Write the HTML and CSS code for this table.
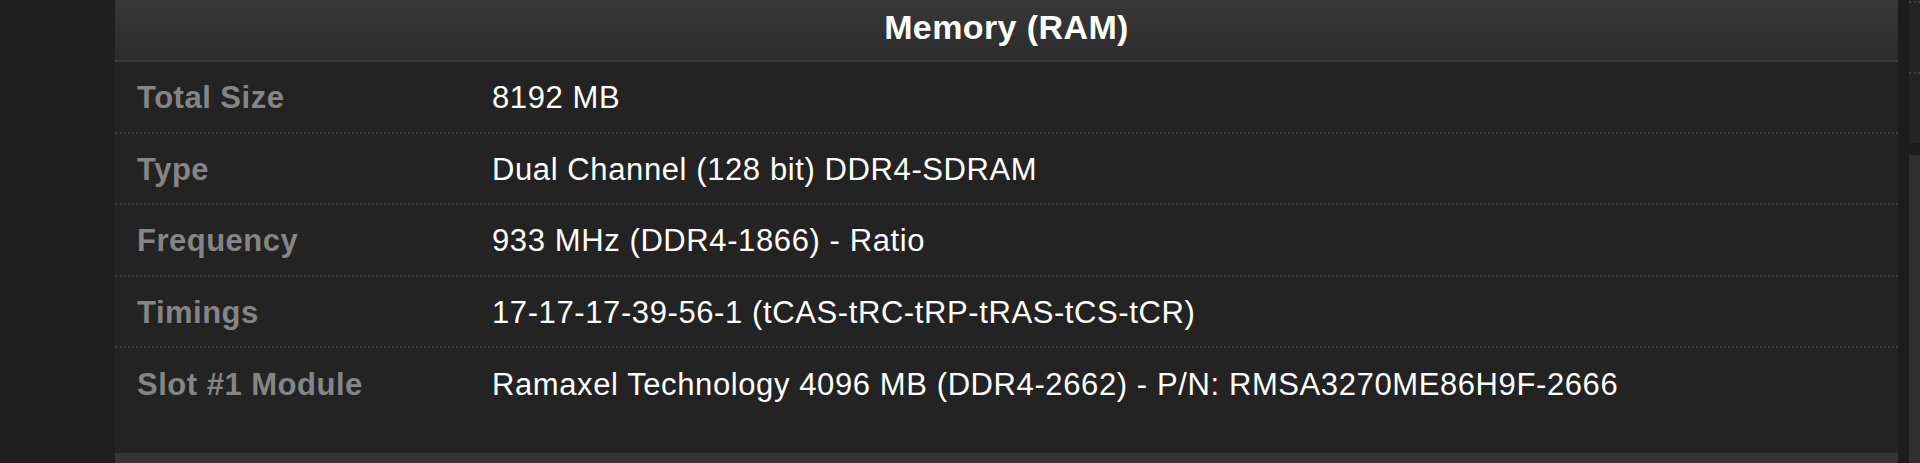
FILE: index.html
```html
<!DOCTYPE html>
<html>
<head>
<meta charset="utf-8">
<title>Memory (RAM)</title>
<link rel="stylesheet" href="styles.css">
</head>
<body>
<div class="layout">
  <div class="left-gutter"></div>
  <div class="main">
    <section class="panel">
      <div class="panel-header">Memory (RAM)</div>
      <div class="row"><div class="label">Total Size</div><div class="value">8192 MB</div></div>
      <div class="row"><div class="label">Type</div><div class="value">Dual Channel (128 bit) DDR4-SDRAM</div></div>
      <div class="row"><div class="label">Frequency</div><div class="value">933 MHz (DDR4-1866) - Ratio</div></div>
      <div class="row"><div class="label">Timings</div><div class="value">17-17-17-39-56-1 (tCAS-tRC-tRP-tRAS-tCS-tCR)</div></div>
      <div class="row last"><div class="label">Slot #1 Module</div><div class="value">Ramaxel Technology 4096 MB (DDR4-2662) - P/N: RMSA3270ME86H9F-2666</div></div>
    </section>
    <div class="next-panel"></div>
  </div>
  <div class="side">
    <div class="side-top"><div class="side-line"></div><div class="side-line second"></div></div>
    <div class="side-bottom"></div>
  </div>
</div>
</body>
</html>
```

FILE: styles.css
```css
html, body {
  margin: 0;
  padding: 0;
  height: 100%;
  background: #1e1e1e;
  overflow: hidden;
}

body {
  font-family: "Liberation Sans", Arial, sans-serif;
}

.layout {
  display: flex;
  height: 463px;
}

.left-gutter {
  width: 115px;
  flex: none;
  background: #1f1f1f;
}

.main {
  width: 1783px;
  flex: none;
  display: flex;
  flex-direction: column;
}

.panel {
  background: #232323;
  padding-bottom: 33px;
}

.panel-header {
  height: 54px;
  padding-bottom: 6px;
  display: flex;
  align-items: center;
  justify-content: center;
  background: linear-gradient(#383838, #2c2c2c);
  border-bottom: 2px dotted #3f3f3f;
  color: #ffffff;
  font-weight: bold;
  font-size: 34px;
  letter-spacing: 0.4px;
}

.row {
  display: grid;
  grid-template-columns: 355px 1fr;
  align-items: center;
  height: 66.5px;
  padding-top: 3px;
  padding-left: 22px;
  border-bottom: 2px dotted #3a3a3a;
}

.row.last {
  border-bottom: none;
  height: 68.5px;
}

.label {
  color: #858585;
  font-weight: bold;
  font-size: 31px;
  letter-spacing: 0.5px;
}

.value {
  color: #ffffff;
  font-size: 31px;
  letter-spacing: 0.6px;
}

.next-panel {
  flex: 1;
  background: #353535;
}

.side {
  flex: 1;
  display: flex;
  flex-direction: column;
  padding-left: 11px;
  background: #1c1c1c;
}

.side-top {
  height: 143px;
  background: #242424;
  display: flex;
  flex-direction: column;
}

.side-line {
  margin-top: 1px;
  border-top: 2px dotted #3f3f3f;
}

.side-line.second {
  margin-top: 69px;
}

.side-bottom {
  margin-top: 12px;
  flex: 1;
  background: #2f2f2f;
}
```
